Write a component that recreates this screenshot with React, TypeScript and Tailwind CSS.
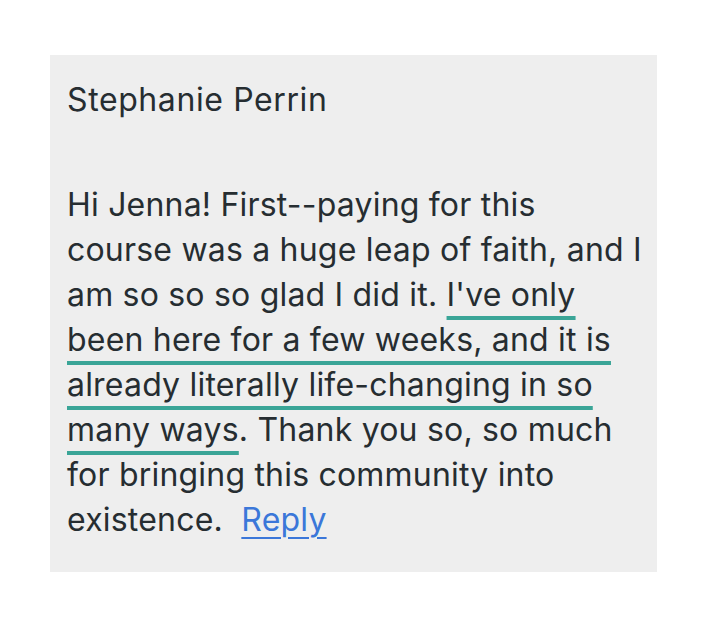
export default function App() {
  const ul = 'underline decoration-[#3aa597] decoration-[3.5px] underline-offset-[10px] [text-decoration-skip-ink:none]'
  return (
    <div className="w-[707px] h-[617px] bg-white pt-[55px] pl-[50px]">
      <div
        className="w-[607px] h-[517px] bg-[#eeeeee] pl-[17px] pt-[22px] text-[#262d31] text-[32px] leading-[45px] tracking-[0.2px]"
        style={{ fontFamily: 'Inter, "Noto Sans", sans-serif' }}
      >
        <div className="tracking-[0.6px]">Stephanie Perrin</div>
        <div className="h-[60px]" />
        <div>Hi Jenna! First--paying for this</div>
        <div>course was a huge leap of faith, and I</div>
        <div>
          am so so so glad I did it. <span className={ul}>I've only</span>
        </div>
        <div>
          <span className={ul}>been here for a few weeks, and it is </span>
        </div>
        <div>
          <span className={ul}>already literally life-changing in so </span>
        </div>
        <div>
          <span className={ul}>many ways</span>. Thank you so, so much
        </div>
        <div>for bringing this community into</div>
        <div>
          existence.{'\u00a0 '}
          <span className="text-[#3b77d9] underline decoration-[2px] underline-offset-[6px]">Reply</span>
        </div>
      </div>
    </div>
  )
}
